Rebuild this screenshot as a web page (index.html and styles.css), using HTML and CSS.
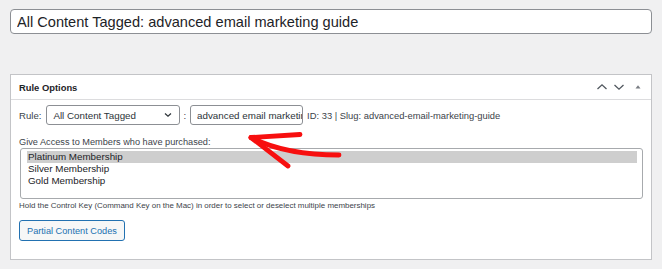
FILE: index.html
```html
<!DOCTYPE html>
<html lang="en">
<head>
<meta charset="utf-8">
<title>Rule Options</title>
<link rel="stylesheet" href="styles.css">
</head>
<body>
<div class="page">
  <input class="title-input" type="text" value="All Content Tagged: advanced email marketing guide">

  <div class="postbox">
    <div class="postbox-header">
      <h2 class="postbox-title">Rule Options</h2>
      <div class="handle-actions">
        <svg class="hicon" width="12" height="8" viewBox="0 0 12 8"><path d="M1.5 6 L6 1.8 L10.5 6" fill="none" stroke="#50575e" stroke-width="1.3"/></svg>
        <svg class="hicon" width="12" height="8" viewBox="0 0 12 8"><path d="M1.5 2 L6 6.2 L10.5 2" fill="none" stroke="#50575e" stroke-width="1.3"/></svg>
        <svg class="hicon tri" width="6" height="6" viewBox="0 0 6 6"><path d="M0.5 4.5 L3 1.2 L5.5 4.5 Z" fill="#787c82"/></svg>
      </div>
    </div>

    <div class="postbox-body">
      <div class="rule-row">
        <span class="rule-label">Rule:</span>
        <div class="select">
          <span>All Content Tagged</span>
          <svg width="8" height="6" viewBox="0 0 8 6"><path d="M1 1.5 L4 4.3 L7 1.5" fill="none" stroke="#2c3338" stroke-width="1.2"/></svg>
        </div>
        <span class="colon">:</span>
        <input class="text-input" type="text" value="advanced email marketing guide">
        <span class="rule-meta">ID: 33 | Slug: advanced-email-marketing-guide</span>
      </div>

      <div class="access-label">Give Access to Members who have purchased:</div>
      <div class="listbox" role="listbox">
        <div class="option selected">Platinum Membership</div>
        <div class="option">Silver Membership</div>
        <div class="option">Gold Membership</div>
      </div>
      <p class="help">Hold the Control Key (Command Key on the Mac) in order to select or deselect multiple memberships</p>
      <button class="button" type="button">Partial Content Codes</button>
    </div>
  </div>

  <svg class="annotation" width="110" height="50" viewBox="240 125 110 50">
    <g fill="none" stroke="#f70f0f" stroke-width="4.8" stroke-linecap="round" stroke-linejoin="round">
      <path d="M251 137.5 Q285 155 339 155"/>
      <path d="M251 137.5 L300 134.5"/>
      <path d="M251 137.5 L288 166"/>
    </g>
  </svg>
</div>
</body>
</html>
```

FILE: styles.css
```css
html, body {
  margin: 0;
  padding: 0;
}
body {
  background: #f0f0f1;
  font-family: "Liberation Sans", Arial, sans-serif;
  color: #1d2327;
}
.page {
  position: relative;
  padding: 9px 10px 10px 10px;
}
.title-input {
  display: block;
  box-sizing: border-box;
  width: 642px;
  height: 25px;
  margin: 0;
  padding: 0 6px;
  border: 1px solid #8c8f94;
  border-radius: 4px;
  background: #fff;
  font-family: "Liberation Sans", Arial, sans-serif;
  font-size: 14.6px;
  color: #1d2327;
}
.postbox {
  margin-top: 40px;
  width: 642px;
  box-sizing: border-box;
  background: #fff;
  border: 1px solid #c3c4c7;
}
.postbox-header {
  height: 24px;
  display: flex;
  align-items: center;
  justify-content: space-between;
  border-bottom: 1px solid #dcdcde;
  padding: 0 0 0 8px;
}
.postbox-title {
  margin: 0;
  font-size: 9.4px;
  font-weight: bold;
  color: #1d2327;
}
.handle-actions {
  display: flex;
  align-items: center;
  padding-right: 10px;
}
.hicon {
  display: block;
  margin-left: 5px;
}
.hicon.tri {
  margin-left: 10px;
}
.postbox-body {
  padding: 5px 8px 18px 8px;
}
.rule-row {
  display: flex;
  align-items: center;
  height: 20px;
  font-size: 9.6px;
}
.rule-label {
  color: #3c434a;
  margin-right: 5px;
}
.select {
  box-sizing: border-box;
  width: 134px;
  height: 20px;
  border: 1px solid #8c8f94;
  border-radius: 3px;
  display: flex;
  align-items: center;
  justify-content: space-between;
  padding: 0 7px 0 6px;
  font-size: 9.8px;
  color: #2c3338;
}
.colon {
  margin: 0 4px 0 3px;
  color: #3c434a;
}
.text-input {
  box-sizing: border-box;
  width: 113px;
  height: 20px;
  margin: 0;
  border: 1px solid #8c8f94;
  border-radius: 3px;
  padding: 0 0 0 6px;
  background: #fff;
  font-family: "Liberation Sans", Arial, sans-serif;
  font-size: 9.8px;
  color: #2c3338;
}
.rule-meta {
  margin-left: 4px;
  font-size: 9.4px;
  color: #3c434a;
}
.access-label {
  margin-top: 11px;
  font-size: 9.2px;
  line-height: 12px;
  color: #3c434a;
}
.listbox {
  box-sizing: border-box;
  height: 51px;
  border: 1px solid #a7aaad;
  border-radius: 3px;
  padding: 2px 5px 0 6px;
  margin-left: 1px;
}
.option {
  height: 12px;
  line-height: 12px;
  padding-left: 1px;
  font-size: 9.8px;
  color: #1d2327;
}
.option.selected {
  background: #cecece;
}
.help {
  margin: 2px 0 0 0;
  font-size: 7.95px;
  line-height: 10px;
  color: #3c434a;
}
.button {
  display: block;
  margin-top: 9px;
  box-sizing: border-box;
  height: 21px;
  padding: 0 7px;
  border: 1px solid #2271b1;
  border-radius: 3px;
  background: #f6f7f7;
  color: #2271b1;
  font-family: "Liberation Sans", Arial, sans-serif;
  font-size: 9.2px;
}
.annotation {
  position: absolute;
  left: 240px;
  top: 125px;
}
```
